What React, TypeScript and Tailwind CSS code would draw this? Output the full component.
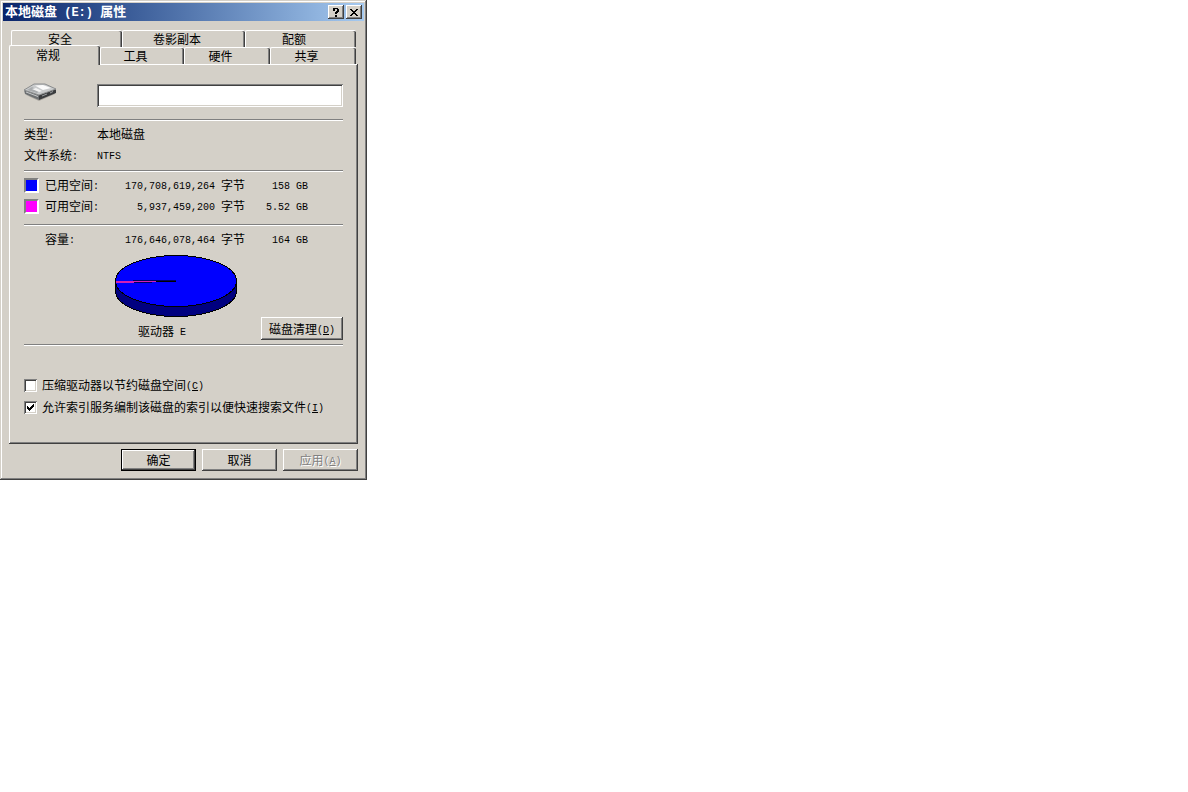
import React, { useState } from "react";
import clsx from "clsx";

type ChildrenProps = { children: React.ReactNode };

const raised =
  "bg-[#d4d0c8] shadow-[inset_-1px_-1px_#404040,inset_1px_1px_#fff,inset_-2px_-2px_#808080]";
const sunken =
  "shadow-[inset_1px_1px_#808080,inset_-1px_-1px_#fff,inset_2px_2px_#404040,inset_-2px_-2px_#d4d0c8]";

const backTabs = ["安全", "卷影副本", "配额"];
const frontTabs = ["常规", "工具", "硬件", "共享"];

const space = [
  { label: "已用空间", color: "bg-[#0000ff]", bytes: "170,708,619,264", size: "158 GB" },
  { label: "可用空间", color: "bg-[#ff00ff]", bytes: "5,937,459,200", size: "5.52 GB" },
];

// half-width latin text, 6px per character
function Latin({ children }: ChildrenProps) {
  return (
    <span className="align-[1px] text-[10px] leading-none whitespace-pre [font-family:'Liberation_Mono',monospace]">
      {children}
    </span>
  );
}

function Hotkey({ children }: ChildrenProps) {
  return (
    <Latin>
      (<u>{children}</u>)
    </Latin>
  );
}

function Groove({ className }: { className?: string }) {
  return <hr className={clsx("h-[2px] border-t border-b border-t-[#808080] border-b-white", className)} />;
}

function DriveIcon() {
  return (
    <svg width="32" height="20" viewBox="0 0 32 20" aria-hidden="true">
      <path d="M2 13 L15 19 L31 12 L30 10 L14 15 Z" fill="#aaa69f" />
      <path d="M0 8 L15 13 L15 18 L1 12 Z" fill="#6d7072" />
      <path d="M15 13 L32 7 L32 11 L15 18 Z" fill="#3a3c3e" />
      <path d="M0 8 L10 2 L21 2 L32 7 L15 13 Z" fill="#c9cbcc" stroke="#8b8d8e" />
      <path d="M11 3.500 L19 3 L27 6 L19 8 Z" fill="#fbfbfb" />
      <path d="M3 8 L8 5 L16 9 L13 11 Z" fill="#a9acae" />
      <path d="M8 7 L12 6 L18 9 L15 10 Z" fill="#f3f3f3" />
      <path d="M2 10 L14 14.500" stroke="#c8cacb" />
      <path d="M18 14 L23 12 M26 11 L29 9.500" stroke="#9b9ea0" />
    </svg>
  );
}

function Pie() {
  return (
    <svg
      width="123"
      height="63"
      viewBox="0 0 123 63"
      shapeRendering="crispEdges"
      role="img"
      aria-labelledby="drive-name">
      <path
        d="M0.500 26 V36 A60.500 25.500 0 0 0 121.500 36 V26 Z"
        fill="#000080"
        stroke="#000"
      />
      <ellipse cx="61" cy="26" rx="60.500" ry="25.500" fill="#0000ff" stroke="#000" />
      <rect x="18" y="25" width="43" height="1" fill="#000060" />
      <rect x="1" y="26" width="40" height="1" fill="#d420b4" />
      <rect x="41" y="26" width="20" height="1" fill="#000" />
      <rect x="1" y="27" width="18" height="1" fill="#d420b4" />
      <rect x="19" y="27" width="18" height="1" fill="#000060" />
    </svg>
  );
}

type TabProps = { name: string; active?: boolean; onClick: () => void };

function Tab({ name, active, onClick }: TabProps) {
  return (
    <button
      role="tab"
      aria-selected={!!active}
      onClick={onClick}
      className={clsx(
        "rounded-t-[2px] border-t border-l border-white bg-[#d4d0c8] pr-[14px] shadow-[inset_-1px_0_#404040,inset_-2px_0_#808080]",
        active && "relative z-10 -mt-[2px] -mb-px pb-[2px]"
      )}>
      {name}
    </button>
  );
}

type CheckProps = { hotkey: string; defaultChecked?: boolean } & ChildrenProps;

function Check({ hotkey, defaultChecked, children }: CheckProps) {
  return (
    <label className="flex h-[22px] items-center gap-[5px] whitespace-nowrap">
      <span className="grid size-[13px] shrink-0">
        <input
          type="checkbox"
          defaultChecked={defaultChecked}
          className={clsx("peer col-start-1 row-start-1 size-[13px] appearance-none bg-white", sunken)}
        />
        <svg
          viewBox="0 0 13 13"
          shapeRendering="crispEdges"
          className="pointer-events-none invisible col-start-1 row-start-1 size-[13px] peer-checked:visible">
          <path d="M3 5h1v1h1v1h1v-1h1v-1h1v-1h1v-1h1v3h-1v1h-1v1h-1v1h-1v1h-1v-1h-1v-1h-1z" />
        </svg>
      </span>
      <span>
        {children}
        <Hotkey>{hotkey}</Hotkey>
      </span>
    </label>
  );
}

export default function App() {
  const [tab, setTab] = useState("常规");

  return (
    <div className="min-h-screen bg-white text-[12px] leading-4 text-black [font-family:'Noto_Sans_CJK_SC',sans-serif]">
      <main
        className="w-full max-w-[367px] bg-[#d4d0c8] p-[3px] pb-[9px] shadow-[inset_-1px_-1px_#404040,inset_1px_1px_#d4d0c8,inset_-2px_-2px_#808080,inset_2px_2px_#fff]">
        <header className="flex h-[18px] items-center gap-[2px] bg-linear-to-r from-[#0a246a] to-[#a6caf0] px-[2px]">
          <h1 className="mr-auto text-[13px] font-bold text-white">
            本地磁盘
            <span className="whitespace-pre text-[12px] [font-family:'Liberation_Mono',monospace]"> (E:) </span>
            属性
          </h1>
          <button aria-label="帮助" className={clsx("grid h-[14px] w-4 place-items-center", raised)}>
            <svg width="8" height="9" viewBox="0 0 8 9" shapeRendering="crispEdges">
              <path d="M1 0h5v1h1v3h-1v1h-1v1h-2v-2h1v-1h1v-2h-2v2h-2zM3 7h2v2h-2z" />
            </svg>
          </button>
          <button aria-label="关闭" className={clsx("grid h-[14px] w-4 place-items-center", raised)}>
            <svg width="8" height="7" viewBox="0 0 8 7" shapeRendering="crispEdges">
              <path d="M0 0h2v1h1v1h2v-1h1v-1h2v1h-1v1h-1v1h-1v1h1v1h1v1h1v1h-2v-1h-1v-1h-2v1h-1v1h-2v-1h1v-1h1v-1h1v-1h-1v-1h-1v-1h-1z" />
            </svg>
          </button>
        </header>

        <div className="px-[6px] pt-[9px]">
          <div role="tablist" className="pr-[2px]">
            <div className="ml-[2px] grid h-[17px] grid-cols-[111fr_123fr_111fr]">
              {backTabs.map((name) => (
                <Tab key={name} name={name} onClick={() => setTab(name)} active={tab === name} />
              ))}
            </div>
            <div className="grid h-[17px] grid-cols-[91fr_84fr_86fr_86fr]">
              {frontTabs.map((name) => (
                <Tab key={name} name={name} onClick={() => setTab(name)} active={tab === name} />
              ))}
            </div>
          </div>

          <section
            role="tabpanel"
            aria-label={tab}
            className="pt-[18px] pr-[15px] pb-[26px] pl-[15px] shadow-[inset_-1px_-1px_#404040,inset_1px_1px_#fff,inset_-2px_-2px_#808080]">
            <div className="flex items-start gap-[41px]">
              <DriveIcon />
              <input
                type="text"
                aria-label="卷标"
                className={clsx("mt-[2px] h-[23px] min-w-0 flex-1 bg-white px-1 outline-none", sunken)}
              />
            </div>

            <Groove className="mt-3" />
            <dl className="grid grid-cols-[73px_1fr] pt-[2px] leading-[21px]">
              <dt>类型<Latin>:</Latin></dt>
              <dd>本地磁盘</dd>
              <dt>文件系统<Latin>:</Latin></dt>
              <dd><Latin>NTFS</Latin></dd>
            </dl>

            <Groove className="mt-[5px]" />
            <table className="mt-[2px] w-full table-fixed leading-[21px]">
              <colgroup>
                <col className="w-[21px]" />
                <col className="w-[70px]" />
                <col className="w-[130px]" />
                <col className="w-[63px]" />
                <col />
              </colgroup>
              <tbody>
                {space.map((row) => (
                  <tr key={row.label}>
                    <td className="pt-[2px]">
                      <div className={clsx("size-[15px] border-2 border-t-[#808080] border-r-white border-b-white border-l-[#808080]", row.color)} />
                    </td>
                    <th scope="row" className="text-left font-normal">
                      {row.label}<Latin>:</Latin>
                    </th>
                    <td className="text-right">
                      <Latin>{row.bytes} </Latin>字节
                    </td>
                    <td className="text-right"><Latin>{row.size}</Latin></td>
                  </tr>
                ))}
              </tbody>
              <tfoot>
                <tr>
                  <td colSpan={5} className="pt-2 pb-[2px]">
                    <Groove />
                  </td>
                </tr>
                <tr>
                  <td />
                  <th scope="row" className="text-left font-normal">容量<Latin>:</Latin></th>
                  <td className="text-right"><Latin>176,646,078,464 </Latin>字节</td>
                  <td className="text-right"><Latin>164 GB</Latin></td>
                </tr>
              </tfoot>
            </table>

            <div className="flex items-end justify-between pt-[6px] pl-[91px]">
              <figure>
                <Pie />
                <figcaption id="drive-name" className="pt-[5px] pb-[5px] pl-[23px]">
                  驱动器<Latin> E</Latin>
                </figcaption>
              </figure>
              <button className={clsx("mb-1 h-[23px] w-[82px] whitespace-nowrap", raised)}>
                磁盘清理<Hotkey>D</Hotkey>
              </button>
            </div>
            <Groove />

            <div className="pt-7">
              <Check hotkey="C">压缩驱动器以节约磁盘空间</Check>
              <Check hotkey="I" defaultChecked>
                允许索引服务编制该磁盘的索引以便快速搜索文件
              </Check>
            </div>
          </section>

          <footer className="mt-[5px] flex justify-end gap-[6px]">
            <button className="h-[22px] w-[75px] border border-black bg-[#d4d0c8] shadow-[inset_-1px_-1px_#404040,inset_1px_1px_#fff,inset_-2px_-2px_#808080]">
              确定
            </button>
            <button className={clsx("h-[22px] w-[75px]", raised)}>取消</button>
            <button disabled className={clsx("h-[22px] w-[75px] text-[#808080] [text-shadow:1px_1px_#fff]", raised)}>
              应用<Hotkey>A</Hotkey>
            </button>
          </footer>
        </div>
      </main>
    </div>
  );
}
